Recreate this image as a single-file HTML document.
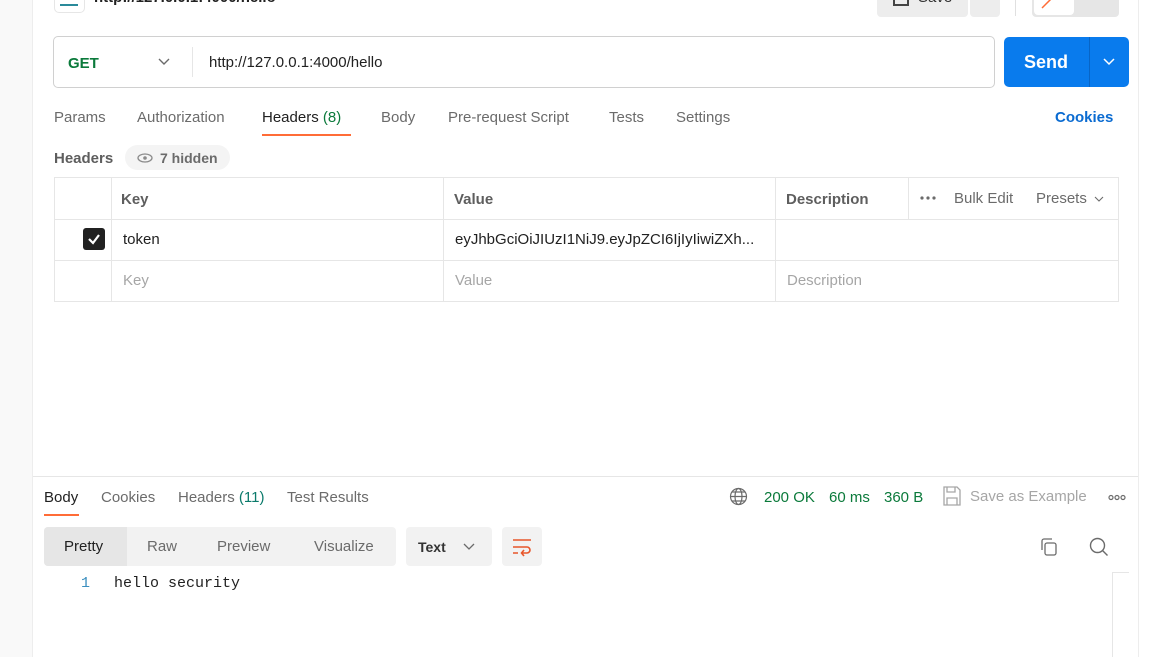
<!DOCTYPE html>
<html><head><meta charset="utf-8"><style>
*{box-sizing:border-box;margin:0;padding:0}
body{width:1151px;height:657px;overflow:hidden;background:#fff;font-family:"Liberation Sans",sans-serif;font-size:14px;color:#212121;position:relative}
.a{position:absolute;white-space:nowrap}
div.a{padding-top:1px}
.g{color:#6b6b6b}
.cell{position:absolute;border-color:#e6e6e6;border-style:solid;border-width:0}
</style></head><body>
<div class="a" style="left:0;top:0;width:33px;height:657px;background:#f9f9f9;border-right:1px solid #ededed"></div>
<div class="a" style="left:1138px;top:0;width:1px;height:476px;background:#ededed"></div>
<div class="a" style="left:1138px;top:476px;width:13px;height:181px;background:#fff;border-left:1px solid #ededed"></div>
<div class="a" style="left:54px;top:-14px;width:31px;height:27px;border:1px solid #e6e6e6;border-radius:5px;background:#fff"></div>
<div class="a" style="left:60px;top:4px;width:18px;height:2px;background:#2a8a9a"></div>
<div class="a" style="left:94px;top:-12px;font-size:15px;font-weight:bold;color:#212121">http://127.0.0.1:4000/hello</div>
<div class="a" style="left:877px;top:-14px;width:91px;height:31px;background:#ededed;border-radius:4px"></div>
<div class="a" style="left:893px;top:-6px;width:16px;height:12px;border:2px solid #444;border-top:none"></div>
<div class="a" style="left:918px;top:-12px;font-size:15px;color:#333">Save</div>
<div class="a" style="left:970px;top:-14px;width:30px;height:31px;background:#ededed;border-radius:4px"></div>
<div class="a" style="left:1015px;top:-10px;width:1px;height:26px;background:#e0e0e0"></div>
<div class="a" style="left:1032px;top:-14px;width:87px;height:31px;background:#e6e6e6;border-radius:4px"></div>
<div class="a" style="left:1034px;top:-12px;width:40px;height:27px;background:#fff;border-radius:4px"></div>
<svg class="a" style="left:1040px;top:0" width="20" height="10"><path d="M2 8 L12 -2" stroke="#ff6c37" stroke-width="1.5"/></svg>
<div class="a" style="left:53px;top:36px;width:942px;height:52px;border:1px solid #d0d0d0;border-radius:5px"></div>
<div class="a" style="left:192px;top:47px;width:1px;height:30px;background:#e6e6e6"></div>
<div class="a" style="left:68px;top:54px;font-size:15px;font-weight:bold;color:#0b7a3b">GET</div>
<svg class="a" style="left:157px;top:57px" width="14" height="10"><path d="M2 2 L7 7 L12 2" stroke="#6b6b6b" stroke-width="1.4" fill="none"/></svg>
<div class="a" style="left:209px;top:53px;font-size:15px">http://127.0.0.1:4000/hello</div>
<div class="a" style="left:1004px;top:37px;width:125px;height:50px;background:#097bed;border-radius:5px"></div>
<div class="a" style="left:1089px;top:37px;width:1px;height:50px;background:#0765c7"></div>
<div class="a" style="left:1024px;top:51px;font-size:18px;font-weight:bold;color:#fff">Send</div>
<svg class="a" style="left:1102px;top:57px" width="14" height="10"><path d="M2 2 L7 7 L12 2" stroke="#fff" stroke-width="1.5" fill="none"/></svg>
<div class="a g" style="left:54px;top:108px;font-size:15px">Params</div>
<div class="a g" style="left:137px;top:108px;font-size:15px">Authorization</div>
<div class="a" style="left:262px;top:108px;font-size:15px">Headers <span style="color:#0b7a3b">(8)</span></div>
<div class="a" style="left:262px;top:134px;width:89px;height:2px;background:#ff6c37;padding:0"></div>
<div class="a g" style="left:381px;top:108px;font-size:15px">Body</div>
<div class="a g" style="left:448px;top:108px;font-size:15px">Pre-request Script</div>
<div class="a g" style="left:609px;top:108px;font-size:15px">Tests</div>
<div class="a g" style="left:676px;top:108px;font-size:15px">Settings</div>
<div class="a" style="left:1055px;top:108px;font-size:15px;font-weight:bold;color:#0a6bd1">Cookies</div>
<div class="a" style="left:54px;top:149px;font-size:15px;font-weight:bold;color:#5e5e5e">Headers</div>
<div class="a" style="left:125px;top:145px;width:105px;height:25px;background:#f4f4f4;border-radius:13px"></div>
<svg class="a" style="left:137px;top:152px" width="16" height="12"><ellipse cx="8" cy="6" rx="7" ry="4" stroke="#8a8a8a" stroke-width="1.3" fill="none"/><circle cx="8" cy="6" r="1.8" fill="#8a8a8a"/></svg>
<div class="a" style="left:160px;top:149px;font-size:14px;font-weight:bold;color:#6b6b6b">7 hidden</div>
<div class="cell" style="left:54px;top:177px;width:1065px;height:125px;border-width:1px"></div>
<div class="cell" style="left:54px;top:219px;width:1065px;height:1px;border-top-width:1px"></div>
<div class="cell" style="left:54px;top:260px;width:1065px;height:1px;border-top-width:1px"></div>
<div class="cell" style="left:111px;top:177px;width:1px;height:125px;border-left-width:1px"></div>
<div class="cell" style="left:443px;top:177px;width:1px;height:125px;border-left-width:1px"></div>
<div class="cell" style="left:775px;top:177px;width:1px;height:125px;border-left-width:1px"></div>
<div class="cell" style="left:908px;top:177px;width:1px;height:42px;border-left-width:1px"></div>
<div class="a" style="left:121px;top:190px;font-size:15px;font-weight:bold;color:#5e5e5e">Key</div>
<div class="a" style="left:454px;top:190px;font-size:15px;font-weight:bold;color:#5e5e5e">Value</div>
<div class="a" style="left:786px;top:190px;font-size:15px;font-weight:bold;color:#5e5e5e">Description</div>
<svg class="a" style="left:920px;top:195px" width="16" height="6" fill="#6b6b6b"><circle cx="2" cy="3" r="1.6"/><circle cx="8" cy="3" r="1.6"/><circle cx="14" cy="3" r="1.6"/></svg>
<div class="a g" style="left:954px;top:189px;font-size:15px">Bulk Edit</div>
<div class="a g" style="left:1036px;top:189px;font-size:15px">Presets</div>
<svg class="a" style="left:1094px;top:195px" width="10" height="8"><path d="M1 2 L5 6 L9 2" stroke="#6b6b6b" stroke-width="1.1" fill="none"/></svg>
<div class="a" style="left:83px;top:228px;width:22px;height:22px;background:#212121;border-radius:3px"></div>
<svg class="a" style="left:86px;top:231px" width="16" height="16"><path d="M3 8 L7 12 L13 4" stroke="#fff" stroke-width="2.2" fill="none"/></svg>
<div class="a" style="left:123px;top:230px;font-size:15px">token</div>
<div class="a" style="left:455px;top:230px;font-size:15px">eyJhbGciOiJIUzI1NiJ9.eyJpZCI6IjIyIiwiZXh...</div>
<div class="a" style="left:123px;top:271px;font-size:15px;color:#a6a6a6">Key</div>
<div class="a" style="left:455px;top:271px;font-size:15px;color:#a6a6a6">Value</div>
<div class="a" style="left:787px;top:271px;font-size:15px;color:#a6a6a6">Description</div>
<div class="a" style="left:33px;top:476px;width:1105px;height:1px;background:#e6e6e6;padding:0"></div>
<div class="a" style="left:44px;top:488px;font-size:15px">Body</div>
<div class="a" style="left:44px;top:514px;width:35px;height:2px;background:#ff6c37;padding:0"></div>
<div class="a g" style="left:101px;top:488px;font-size:15px">Cookies</div>
<div class="a g" style="left:178px;top:488px;font-size:15px">Headers <span style="color:#0b7a6b">(11)</span></div>
<div class="a g" style="left:287px;top:488px;font-size:15px">Test Results</div>
<svg class="a" style="left:729px;top:487px" width="19" height="19" fill="none" stroke="#6b6b6b" stroke-width="1.2"><circle cx="9.5" cy="9.5" r="8"/><ellipse cx="9.5" cy="9.5" rx="3.5" ry="8"/><path d="M1.5 9.5h16M3 5h13M3 14h13"/></svg>
<div class="a" style="left:764px;top:488px;font-size:15px;color:#0b7a3b">200 OK</div>
<div class="a" style="left:829px;top:488px;font-size:15px;color:#0b7a3b">60 ms</div>
<div class="a" style="left:884px;top:488px;font-size:15px;color:#0b7a3b">360 B</div>
<svg class="a" style="left:943px;top:486px" width="18" height="20" fill="none" stroke="#a6a6a6" stroke-width="1.3"><path d="M1 1h13l3 3v15H1z"/><path d="M4 1v5h8V1M4 19v-7h10v7"/></svg>
<div class="a" style="left:970px;top:487px;font-size:15px;color:#a6a6a6">Save as Example</div>
<svg class="a" style="left:1108px;top:494px" width="18" height="7" fill="none" stroke="#6b6b6b" stroke-width="1.2"><circle cx="3" cy="3.5" r="2"/><circle cx="9" cy="3.5" r="2"/><circle cx="15" cy="3.5" r="2"/></svg>
<div class="a" style="left:44px;top:527px;width:352px;height:39px;background:#f2f2f2;border-radius:4px"></div>
<div class="a" style="left:44px;top:527px;width:83px;height:39px;background:#e6e6e6;border-radius:4px 0 0 4px"></div>
<div class="a" style="left:64px;top:537px;font-size:15px">Pretty</div>
<div class="a g" style="left:147px;top:537px;font-size:15px">Raw</div>
<div class="a g" style="left:217px;top:537px;font-size:15px">Preview</div>
<div class="a g" style="left:314px;top:537px;font-size:15px">Visualize</div>
<div class="a" style="left:406px;top:527px;width:86px;height:39px;background:#f2f2f2;border-radius:4px"></div>
<div class="a" style="left:418px;top:538px;font-size:14px;font-weight:bold;color:#333">Text</div>
<svg class="a" style="left:463px;top:542px" width="12" height="9"><path d="M1 2 L6 7 L11 2" stroke="#6b6b6b" stroke-width="1.3" fill="none"/></svg>
<div class="a" style="left:502px;top:527px;width:40px;height:39px;background:#f2f2f2;border-radius:4px"></div>
<svg class="a" style="left:511px;top:537px" width="22" height="20" fill="none" stroke="#e8562a" stroke-width="1.6"><path d="M2 3h18M2 10h14a3 3 0 0 1 0 6h-5M13 13l-2.5 3 2.5 3M2 16h5"/></svg>
<svg class="a" style="left:1039px;top:537px" width="20" height="20" fill="none" stroke="#6b6b6b" stroke-width="1.3"><rect x="6" y="6" width="11" height="12" rx="2"/><path d="M3 13V4a2 2 0 0 1 2-2h8"/></svg>
<svg class="a" style="left:1089px;top:537px" width="20" height="20" fill="none" stroke="#6b6b6b" stroke-width="1.4"><circle cx="8.5" cy="8.5" r="7"/><path d="M13.5 13.5l5 5"/></svg>
<div class="a" style="left:81px;top:574px;font-family:'Liberation Mono',monospace;font-size:15px;color:#3b8fbf">1</div>
<div class="a" style="left:114px;top:574px;font-family:'Liberation Mono',monospace;font-size:15px;color:#212121">hello security</div>
<div class="a" style="left:1112px;top:572px;width:17px;height:85px;border-left:1px solid #e6e6e6;border-top:1px solid #e6e6e6"></div>
</body></html>
